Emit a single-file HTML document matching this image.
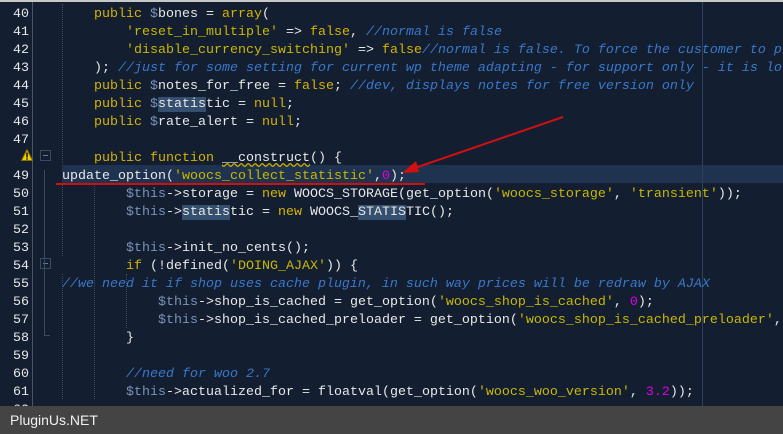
<!DOCTYPE html>
<html><head><style>
*{margin:0;padding:0}
body{width:783px;height:434px;overflow:hidden;background:#131e31;position:relative;font-family:"Liberation Mono",monospace;font-size:13.33px}
.top{position:absolute;left:0;top:0;width:783px;height:2px;background:#c8c8c8}
.sep{position:absolute;left:32px;top:2px;width:1px;height:404px;background:#4a5566}
.rm{position:absolute;left:702px;top:2px;width:1px;height:404px;background:#2c4060}
.hl{position:absolute;left:62px;top:165px;width:721px;height:18px;background:#1f3350}
.ln{position:absolute;left:0;width:29px;text-align:right;color:#e8e8e8;height:18px;line-height:18px;margin-top:2px}
.c{position:absolute;left:62px;white-space:pre;color:#e8e8e8;height:18px;line-height:18px;margin-top:2px}
.k{color:#d6b300}.s{color:#c9b800}.m{color:#7b93b8}.cm{color:#3a78c8;font-style:italic}.n{color:#e000e0}
.sel{background:#34506e}
.g{position:absolute;width:0;border-left:1px dotted #3a4a60}
.fold{position:absolute;left:40px;width:9px;height:9px;border:1px solid #3a4a60}
.fold:after{content:"";position:absolute;left:2px;top:4px;width:5px;height:1px;background:#6a7a90}
.foot{position:absolute;left:0;top:406px;width:783px;height:28px;background:#444;color:#f0f0f0;font-family:"Liberation Sans",sans-serif;font-size:14px;line-height:28px;padding-left:10px;box-sizing:border-box}
</style></head><body>
<div class="top"></div>
<div class="hl"></div>
<div class="sep"></div>
<div class="rm"></div>
<div class="g" style="left:62px;top:4px;height:160px"></div>
<div class="g" style="left:94px;top:184px;height:215px"></div>
<div class="g" style="left:62px;top:184px;height:72px"></div>
<div class="g" style="left:62px;top:274px;height:125px"></div>
<div class="g" style="left:126px;top:274px;height:54px"></div>
<div class="fold" style="top:150px"></div>
<div class="fold" style="top:258px"></div>
<div style="position:absolute;left:44px;top:170px;width:1px;height:165px;background:#3a4a60"></div>
<div style="position:absolute;left:44px;top:335px;width:6px;height:1px;background:#3a4a60"></div>
<svg style="position:absolute;left:21px;top:149px" width="12" height="12"><polygon points="6,0.5 11.5,11.5 0.5,11.5" fill="#f0d000" stroke="#8a7000" stroke-width="1"/><rect x="5.3" y="3.5" width="1.4" height="5" fill="#000"/><rect x="5.3" y="9.3" width="1.4" height="1.4" fill="#000"/></svg>

<div class="ln" style="top:4px">40</div><div class="c" style="top:4px">    <span class="k">public</span> <span class="m">$</span>bones = <span class="k">array</span>(</div>
<div class="ln" style="top:22px">41</div><div class="c" style="top:22px">        <span class="s">'reset_in_multiple'</span> =&gt; <span class="k">false</span>, <span class="cm">//normal is false</span></div>
<div class="ln" style="top:40px">42</div><div class="c" style="top:40px">        <span class="s">'disable_currency_switching'</span> =&gt; <span class="k">false</span><span class="cm">//normal is false. To force the customer to p</span></div>
<div class="ln" style="top:58px">43</div><div class="c" style="top:58px">    ); <span class="cm">//just for some setting for current wp theme adapting - for support only - it is lo</span></div>
<div class="ln" style="top:76px">44</div><div class="c" style="top:76px">    <span class="k">public</span> <span class="m">$</span>notes_for_free = <span class="k">false</span>; <span class="cm">//dev, displays notes for free version only</span></div>
<div class="ln" style="top:94px">45</div><div class="c" style="top:94px">    <span class="k">public</span> <span class="m">$</span><span class="sel">statis</span>tic = <span class="k">null</span>;</div>
<div class="ln" style="top:112px">46</div><div class="c" style="top:112px">    <span class="k">public</span> <span class="m">$</span>rate_alert = <span class="k">null</span>;</div>
<div class="ln" style="top:130px">47</div>
<div class="c" style="top:148px">    <span class="k">public</span> <span class="k">function</span> <span style="text-decoration:underline wavy #c8b000">__construct</span>() {</div>
<div class="ln" style="top:166px">49</div><div class="c" style="top:166px">update_option(<span class="s">'woocs_collect_statistic'</span>,<span class="n">0</span>);</div>
<div class="ln" style="top:184px">50</div><div class="c" style="top:184px">        <span class="m">$this</span>-&gt;storage = <span class="k">new</span> WOOCS_STORAGE(get_option(<span class="s">'woocs_storage'</span>, <span class="s">'transient'</span>));</div>
<div class="ln" style="top:202px">51</div><div class="c" style="top:202px">        <span class="m">$this</span>-&gt;<span class="sel">statis</span>tic = <span class="k">new</span> WOOCS_<span class="sel">STATIS</span>TIC();</div>
<div class="ln" style="top:220px">52</div>
<div class="ln" style="top:238px">53</div><div class="c" style="top:238px">        <span class="m">$this</span>-&gt;init_no_cents();</div>
<div class="ln" style="top:256px">54</div><div class="c" style="top:256px">        <span class="k">if</span> (!defined(<span class="s">'DOING_AJAX'</span>)) {</div>
<div class="ln" style="top:274px">55</div><div class="c" style="top:274px"><span class="cm">//we need it if shop uses cache plugin, in such way prices will be redraw by AJAX</span></div>
<div class="ln" style="top:292px">56</div><div class="c" style="top:292px">            <span class="m">$this</span>-&gt;shop_is_cached = get_option(<span class="s">'woocs_shop_is_cached'</span>, <span class="n">0</span>);</div>
<div class="ln" style="top:310px">57</div><div class="c" style="top:310px">            <span class="m">$this</span>-&gt;shop_is_cached_preloader = get_option(<span class="s">'woocs_shop_is_cached_preloader'</span>, </div>
<div class="ln" style="top:328px">58</div><div class="c" style="top:328px">        }</div>
<div class="ln" style="top:346px">59</div>
<div class="ln" style="top:364px">60</div><div class="c" style="top:364px">        <span class="cm">//need for woo 2.7</span></div>
<div class="ln" style="top:382px">61</div><div class="c" style="top:382px">        <span class="m">$this</span>-&gt;actualized_for = floatval(get_option(<span class="s">'woocs_woo_version'</span>, <span class="n">3.2</span>));</div>
<div class="ln" style="top:400px">62</div>

<div style="position:absolute;left:56px;top:183px;width:369px;height:2px;background:#d01010"></div>
<svg style="position:absolute;left:0;top:0" width="783" height="434"><line x1="563" y1="117" x2="412" y2="169" stroke="#d01010" stroke-width="2"/><polygon points="402,173 416,161 419,172" fill="#d01010"/></svg>
<div class="foot">PluginUs.NET</div>
</body></html>
